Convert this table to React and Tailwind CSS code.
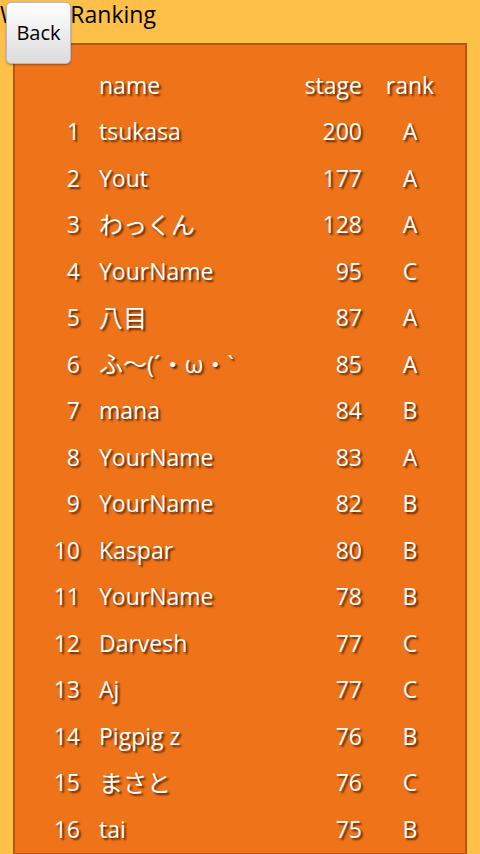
import React from "react";

const rows = [
  [1, "tsukasa", 200, "A"],
  [2, "Yout", 177, "A"],
  [3, "わっくん", 128, "A", true],
  [4, "YourName", 95, "C"],
  [5, "八目", 87, "A", true],
  [6, "ふ〜(´・ω・`", 85, "A", true],
  [7, "mana", 84, "B"],
  [8, "YourName", 83, "A"],
  [9, "YourName", 82, "B"],
  [10, "Kaspar", 80, "B"],
  [11, "YourName", 78, "B"],
  [12, "Darvesh", 77, "C"],
  [13, "Aj", 77, "C"],
  [14, "Pigpig z", 76, "B"],
  [15, "まさと", 76, "C", true],
  [16, "tai", 75, "B"],
];

const font = { fontFamily: '"Open Sans", "Noto Sans CJK JP", sans-serif' };

function Row({ n, name, stage, rank, cjk }) {
  return (
    <div className="grid grid-cols-[65px_1fr_auto_96px] items-center h-[46.5px] text-[23px] leading-none text-white [text-shadow:2px_2px_2px_rgba(70,25,0,0.85)]">
      <div className="text-right">{n}</div>
      <div className={cjk ? "pl-[19px] whitespace-nowrap text-[24px]" : "pl-[19px] whitespace-nowrap"}>{name}</div>
      <div className="text-right">{stage}</div>
      <div className="text-center">{rank}</div>
    </div>
  );
}

export default function App() {
  return (
    <div className="w-[480px] h-[854px] bg-[#FFC04A] overflow-hidden relative flex flex-col" style={font}>
      <div className="h-[43px] shrink-0 text-[23px] text-black leading-none pt-[3px] pl-0">World Ranking</div>
      <button className="absolute left-[6px] top-[2px] w-[65px] h-[62px] rounded-[5px] border border-[#b9b9b9] bg-gradient-to-b from-[#ffffff] to-[#dcdcdc] text-black text-[20px] shadow-[0_1px_2px_rgba(0,0,0,0.35)]">
        Back
      </button>
      <div className="mx-[13px] flex-1 bg-[#EF7419] border-2 border-[#B8560F] pt-[17px] pr-[7px]">
        <Row n="" name="name" stage="stage" rank="rank" />
        {rows.map(([n, name, stage, rank, cjk]) => (
          <Row key={n} n={n} name={name} stage={stage} rank={rank} cjk={cjk} />
        ))}
      </div>
    </div>
  );
}
